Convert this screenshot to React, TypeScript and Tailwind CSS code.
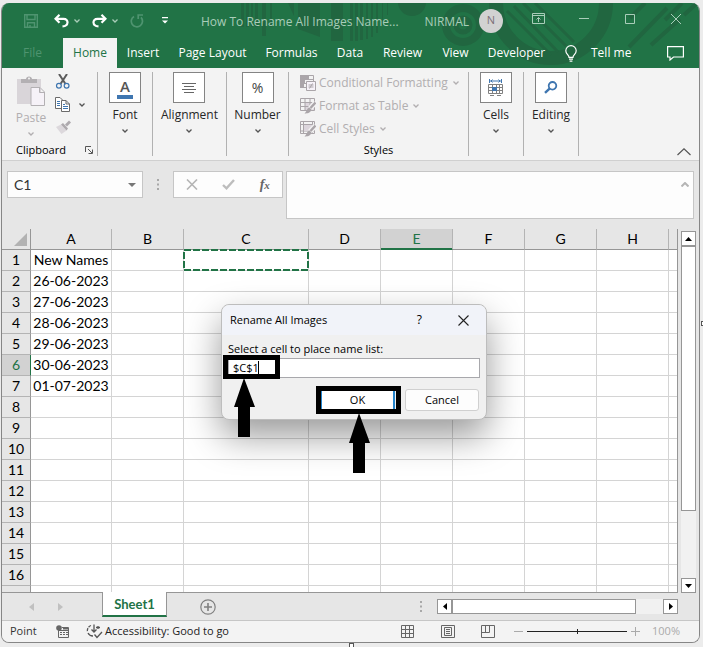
import React, { useState } from 'react';
import clsx from 'clsx';

const MENU = [
  { label: 'File', width: 'w-[61px]' },
  { label: 'Home', width: 'w-[54px]' },
  { label: 'Insert', width: 'w-[52px]' },
  { label: 'Page Layout', width: 'w-[87px]' },
  { label: 'Formulas', width: 'w-[71px]' },
  { label: 'Data', width: 'w-[46px]' },
  { label: 'Review', width: 'w-[59px]' },
  { label: 'View', width: 'w-[47px]' },
  { label: 'Developer', width: 'w-[75px]' },
];

const COLUMNS = [
  { name: 'A', width: 'w-[81px]' },
  { name: 'B', width: 'w-[72px]' },
  { name: 'C', width: 'w-[125px]' },
  { name: 'D', width: 'w-[72px]' },
  { name: 'E', width: 'w-[72px]' },
  { name: 'F', width: 'w-[72px]' },
  { name: 'G', width: 'w-[72px]' },
  { name: 'H', width: 'w-[72px]' },
];

const NAMES = ['New Names', '26-06-2023', '27-06-2023', '28-06-2023', '29-06-2023', '30-06-2023', '01-07-2023'];
const ROWS = Array.from({ length: 16 }, (_, i) => i + 1);

const Chevron = ({ className = '' }: { className?: string }) => (
  <svg width="6" height="4" viewBox="0 0 6 4" className={className} fill="none" stroke="currentColor" strokeWidth="1.3">
    <path d="M0.5 0.5 L3 3 L5.5 0.5" />
  </svg>
);

const Grip = () => (
  <svg width="2" height="11" viewBox="0 0 2 11" fill="#a8a8a8">
    <rect width="2" height="2" y="0" />
    <rect width="2" height="2" y="4.5" />
    <rect width="2" height="2" y="9" />
  </svg>
);

const HeaderPattern = () => (
  <svg className="absolute left-0 top-0" width="697" height="65" viewBox="2 3 697 65" fill="#216640">
    <rect x="241" y="3" width="3" height="24" />
    <rect x="246" y="3" width="3" height="24" />
    <rect x="251" y="3" width="2" height="24" />
    <rect x="255" y="3" width="3" height="24" />
    <rect x="262" y="3" width="4" height="33" />
    <rect x="270" y="3" width="2" height="24" />
    <path d="M288 3 H294 V16 Z M298 3 H320 V37 L298 29 Z" />
    <rect x="331" y="3" width="12" height="38" />
    <rect x="350" y="3" width="3" height="38" />
    <rect x="355" y="3" width="3" height="38" />
    <rect x="360" y="3" width="3" height="37" />
    <rect x="366" y="3" width="2" height="36" />
    <rect x="371" y="3" width="2" height="34" />
    <rect x="376" y="3" width="2" height="30" />
    <rect x="382" y="3" width="1" height="22" />
    <rect x="387" y="3" width="1" height="12" />
    <circle cx="412" cy="2" r="14" />
    <g fill="none" stroke="#216640">
      <circle cx="463" cy="25" r="17" strokeWidth="8" />
      <circle cx="463" cy="25" r="7" strokeWidth="5" />
      <circle cx="551" cy="3" r="55" strokeWidth="14" />
      <path d="M507 11 L551 55 M514 6 L558 52 M523 3 L566 46 M535 3 L574 42" strokeWidth="3" />
      <path d="M645 3 L630 18 M667 8 L629 47 M682 3 L665 20 M680 19 L651 45 M697 3 L684 15" strokeWidth="4" />
    </g>
  </svg>
);

const TitleBar = () => (
  <div className="relative flex h-[35px] items-center pl-[11px] text-[#a9cdb9]">
    <button aria-label="Save" className="grid w-9 place-items-center text-[#4f9470]">
      <svg width="14" height="14" viewBox="0 0 14 14" fill="none" stroke="currentColor" strokeWidth="1.4">
        <path d="M0.7 0.7 H13.3 V13.3 H0.7 Z M3 0.7 V5.5 H11 V0.7 M3.5 13 V8.8 H10.5 V13 M6 11 V13" />
      </svg>
    </button>
    <button aria-label="Undo" className="grid w-6 place-items-center text-white">
      <svg width="15" height="14" viewBox="0 0 15 14" fill="none" stroke="currentColor" strokeWidth="2.2">
        <path d="M5.5 0.8 L1.5 4.8 L5.5 8.8 M1.8 4.8 H9.5 C15 4.8 15 12.2 8.5 12.4" />
      </svg>
    </button>
    <button aria-label="Undo history" className="grid w-2 place-items-center"><Chevron /></button>
    <button aria-label="Redo" className="ml-1.5 grid w-6 place-items-center text-white">
      <svg width="15" height="14" viewBox="0 0 15 14" fill="none" stroke="currentColor" strokeWidth="2.2">
        <path d="M9.5 0.8 L13.5 4.8 L9.5 8.8 M13.2 4.8 H5.5 C0 4.8 0 12.2 6.5 12.4" />
      </svg>
    </button>
    <button aria-label="Redo history" className="grid w-2 place-items-center"><Chevron /></button>
    <button aria-label="Repeat" className="ml-1.5 grid w-6 place-items-center text-[#4f9470]">
      <svg width="14" height="14" viewBox="0 0 14 14" fill="none" stroke="currentColor" strokeWidth="1.7">
        <path d="M4 2.4 A5.6 5.6 0 1 0 11 3.4 M8.2 5 V1 H13" />
      </svg>
    </button>
    <button aria-label="Customize toolbar" className="ml-1 grid w-6 place-items-center text-white">
      <svg width="6" height="7" viewBox="0 0 6 7" fill="currentColor">
        <path d="M0 0 H6 V1.3 H0 Z M0 3.4 H6 L3 6.6 Z" />
      </svg>
    </button>
    <span className="ml-6 whitespace-nowrap pt-0.5">How To Rename All Images Name...</span>
    <span className="ml-auto pt-0.5">NIRMAL</span>
    <span className="ml-2.5 mr-3 grid size-6 place-items-center rounded-full bg-[#d2d2d2] text-[11px] text-[#7d6f78]">N</span>
    <button aria-label="Ribbon display options" className="grid w-[46px] place-items-center pb-1">
      <svg width="13" height="11" viewBox="0 0 13 11" fill="none" stroke="currentColor">
        <path d="M0.5 0.5 H12.5 V10.5 H0.5 Z M0.5 2.5 H12.5 M6.5 9 V4.5 M4.5 6.5 L6.5 4.5 L8.5 6.5" />
      </svg>
    </button>
    <button aria-label="Minimize" className="grid w-[46px] place-items-center pb-1">
      <svg width="10" height="10" viewBox="0 0 10 10" stroke="currentColor"><path d="M0 4.5 H10" /></svg>
    </button>
    <button aria-label="Maximize" className="grid w-[46px] place-items-center pb-1">
      <svg width="10" height="10" viewBox="0 0 10 10" fill="none" stroke="currentColor"><path d="M0.5 0.5 H9.5 V9.5 H0.5 Z" /></svg>
    </button>
    <button aria-label="Close" className="grid w-[46px] place-items-center pb-1">
      <svg width="10" height="10" viewBox="0 0 10 10" stroke="currentColor"><path d="M0 0 L10 10 M10 0 L0 10" /></svg>
    </button>
  </div>
);

const MenuBar = () => {
  const [active, setActive] = useState('Home');

  return (
    <div className="relative flex h-[30px] text-white">
      {MENU.map(({ label, width }) => (
        <button
          key={label}
          onClick={() => setActive(label)}
          className={clsx(
            'shrink-0 whitespace-nowrap text-center',
            width,
            label === 'File' && 'text-[#4f9470]',
            active === label && 'bg-[#f3f3f3] text-[#217346]',
          )}
        >
          {label}
        </button>
      ))}
      <button className="ml-[11px] flex items-center gap-3.5 whitespace-nowrap">
        <svg width="12" height="17" viewBox="0 0 12 17" fill="none" stroke="currentColor" strokeWidth="1.2">
          <path d="M4 12.3 C4 9.8 0.8 9.3 0.8 5.8 A5.2 5.2 0 0 1 11.2 5.8 C11.2 9.3 8 9.8 8 12.3 Z M4 14.2 H8 M4.6 16.2 H7.4" />
        </svg>
        Tell me
      </button>
      <button aria-label="Comments" className="ml-auto mr-[15px]">
        <svg width="17" height="15" viewBox="0 0 17 15" fill="none" stroke="currentColor" strokeWidth="1.2">
          <path d="M0.6 0.6 H16.4 V11 H6.5 L3 14 V11 H0.6 Z" />
        </svg>
      </button>
    </div>
  );
};

interface GroupProps {
  label: string;
  width: string;
  children: React.ReactNode;
}

const CollapsedGroup = ({ label, width, children }: GroupProps) => (
  <div className={clsx('flex shrink-0 justify-center border-r border-[#b1b1b1]', width)}>
    <button className="flex flex-col items-center">
      <span className="grid h-[31px] w-8 place-items-center border border-[#848484] bg-white">{children}</span>
      <span className="mt-1 leading-4">{label}</span>
      <Chevron className="mt-1.5 text-[#555]" />
    </button>
  </div>
);

const StyleGrid = ({ children }: { children?: React.ReactNode }) => (
  <svg width="16" height="16" viewBox="0 0 16 16" fill="none" stroke="#aaa5a9">
    {children}
  </svg>
);

const Brush = () => (
  <>
    <path d="M15.5 4.5 L10 10.5" stroke="#f3f3f3" strokeWidth="5" />
    <path d="M15.5 4.5 L10.5 10" strokeWidth="2.4" stroke="#aaa5a9" />
    <path d="M9.5 9.5 L11.5 11.5 C10.5 15 8 15.5 4.5 15.5 C7 13.5 6.5 10.5 9.5 9.5 Z" fill="#aaa5a9" stroke="none" />
  </>
);

const Ribbon = () => (
  <div className="flex h-[93px] border-b border-[#d0d0d0] bg-[#f3f3f3] py-1 text-[#262626]">
    <div className="flex w-24 shrink-0 flex-col border-r border-[#b1b1b1]">
      <div className="flex h-[74px] pl-[15px]">
        <button className="flex w-7 flex-col items-center text-[#b1aeb0]">
          <svg width="28" height="30" viewBox="0 0 28 30" className="mt-1">
            <path d="M0 3 H24 V28 H0 Z" fill="#d9d5d9" />
            <path d="M4 7 V3 H9 C9 -0.5 15 -0.5 15 3 H20 V7 Z" fill="#b3b0b3" />
            <circle cx="12" cy="2.6" r="1" fill="#f3f3f3" />
            <path d="M14 11.5 H23 L27.5 16 V29.5 H14 Z M22.5 11.5 V16.5 H27.5" fill="#f6f2f8" stroke="#b3b0b3" />
          </svg>
          <span className="mt-1 leading-4">Paste</span>
          <Chevron className="mt-1.5" />
        </button>
        <div className="ml-2.5 flex flex-col gap-2">
          <button aria-label="Cut" className="mt-0.5">
            <svg width="16" height="15" viewBox="0 0 16 15" fill="none">
              <path d="M4 0 L10.5 10 M12 0 L5.5 10" stroke="#5c5c5c" strokeWidth="2" />
              <circle cx="3.9" cy="11.8" r="2.4" stroke="#3f76b0" strokeWidth="1.2" />
              <circle cx="11.6" cy="11.8" r="2.4" stroke="#3f76b0" strokeWidth="1.2" />
            </svg>
          </button>
          <button className="flex items-center gap-2" aria-label="Copy">
            <svg width="16" height="15" viewBox="0 0 16 15" fill="#fff" stroke="#6b6b6b">
              <path d="M0.5 0.5 H5 L8.5 4 V11.5 H0.5 Z" />
              <path d="M2 4.5 H5 M2 6.5 H5 M2 8.5 H5" stroke="#3f76b0" />
              <path d="M6.5 3.5 H11 L14.5 7 V14.5 H6.5 Z M11 3.5 V7 H14.5" />
              <path d="M8 7.5 H10 M8 9.5 H13 M8 11.5 H13" stroke="#3f76b0" />
            </svg>
            <Chevron className="text-[#555]" />
          </button>
          <button aria-label="Format Painter">
            <svg width="17" height="15" viewBox="0 0 17 15">
              <path d="M1 7 L6 4.5 L11.5 10.5 L6.5 14 Z" fill="#dcd8dc" />
              <path d="M6 4.5 L8 3 L13 8.5 L11.5 10.5 Z M10 4.5 L14 0.5 L16 2.5 L12 6.5 Z" fill="#aeaaae" />
            </svg>
          </button>
        </div>
      </div>
      <div className="flex items-center justify-between pl-3.5 pr-1 text-[11px] leading-3 text-black">
        Clipboard
        <button aria-label="Clipboard options">
          <svg width="8" height="8" viewBox="0 0 8 8" fill="none" stroke="#555">
            <path d="M0.5 6 V0.5 H6 M3 3 L7 7 M7.5 3.5 V7.5 H3.5" />
          </svg>
        </button>
      </div>
    </div>

    <CollapsedGroup label="Font" width="w-[55px]">
      <span className="w-4 border-b-4 border-[#3f76b0] text-center text-[15px] font-semibold leading-[18px] text-[#555]">A</span>
    </CollapsedGroup>
    <CollapsedGroup label="Alignment" width="w-[74px]">
      <svg width="14" height="10" viewBox="0 0 14 10" stroke="#666">
        <path d="M0 0.5 H14 M2 3.5 H12 M0 6.5 H14 M2 9.5 H12" />
      </svg>
    </CollapsedGroup>
    <CollapsedGroup label="Number" width="w-[62px]">
      <span className="text-[14px] leading-5 text-[#444]">%</span>
    </CollapsedGroup>

    <div className="flex w-[180px] shrink-0 flex-col border-r border-[#b1b1b1] text-[#b1aeb0]">
      <div className="flex h-[74px] flex-col gap-[7px] pl-[11px] pt-[3px]">
        <button className="flex h-4 items-center gap-[3px] whitespace-nowrap">
          <StyleGrid>
            <path d="M0.5 0.5 H13.5 V12.5 H0.5 Z M0.5 4.5 H13.5 M0.5 8.5 H6" />
            <path d="M0 0 H9 V4 H0 Z M0 5 H5 V8 H0 Z M0 9 H4 V13 H0 Z" fill="#aaa5a9" stroke="none" />
            <path d="M6.5 6.5 H15.5 V15.5 H6.5 Z" fill="#f6f2f8" />
            <path d="M8.5 10 H13.5 M8.5 12 H13.5 M12.5 8.5 L9.5 13.5" />
          </StyleGrid>
          Conditional Formatting
          <Chevron className="ml-0.5" />
        </button>
        <button className="flex h-4 items-center gap-[3px] whitespace-nowrap">
          <StyleGrid>
            <path d="M5 5 H14 V13 H5 Z" fill="#dcd5dc" stroke="none" />
            <path d="M0.5 0.5 H14.5 V12.5 H0.5 Z M0.5 4.5 H14.5 M0.5 8.5 H14.5 M5 0.5 V12.5 M10 0.5 V12.5" />
            <Brush />
          </StyleGrid>
          Format as Table
          <Chevron className="ml-0.5" />
        </button>
        <button className="flex h-4 items-center gap-[3px] whitespace-nowrap">
          <StyleGrid>
            <path d="M0.5 0.5 H14.5 V12.5 H0.5 Z M0.5 3.5 H14.5 M3.5 0.5 V12.5 M12.5 0.5 V12.5 M0.5 10 H14" />
            <path d="M4 4 H12 V10 H4 Z" fill="#dcd5dc" stroke="none" />
            <Brush />
          </StyleGrid>
          Cell Styles
          <Chevron className="ml-0.5" />
        </button>
      </div>
      <div className="text-center text-[11px] leading-3 text-black">Styles</div>
    </div>

    <CollapsedGroup label="Cells" width="w-[55px]">
      <svg width="16" height="17" viewBox="0 0 16 17" fill="none" stroke="#808080">
        <path d="M1.5 0 V4 M13.5 0 V4 M2 2 H13 M4.5 0.5 L3 2 L4.5 3.5 M10.5 0.5 L12 2 L10.5 3.5" stroke="#3f76b0" />
        <path d="M0.5 5.5 H14.5 V14.5 H0.5 Z M0.5 8.5 H14.5 M0.5 11.5 H14.5 M4.5 5.5 V14.5 M8.5 5.5 V14.5 M11.5 5.5 V14.5 M2 16.5 H6 M9 16.5 H13" />
        <path d="M4 8 H9 V12 H4 Z" fill="#3f76b0" stroke="none" />
      </svg>
    </CollapsedGroup>
    <CollapsedGroup label="Editing" width="w-[55px]">
      <svg width="14" height="13" viewBox="0 0 14 13" fill="none" stroke="#3f76b0">
        <circle cx="8.5" cy="4.8" r="3.8" strokeWidth="1.8" />
        <path d="M5.8 7.3 L1 11.8" strokeWidth="2.4" />
      </svg>
    </CollapsedGroup>

    <button aria-label="Collapse ribbon" className="ml-auto mr-2 self-end">
      <svg width="14" height="8" viewBox="0 0 14 8" fill="none" stroke="#555" strokeWidth="1.2">
        <path d="M0.5 7 L7 0.8 L13.5 7" />
      </svg>
    </button>
  </div>
);

const FormulaBar = () => (
  <div className="flex h-[68px] items-start px-[5px] pt-2.5">
    <div className="flex h-[27px] w-[136px] shrink-0 items-center border border-[#c6c6c6] bg-[#fdfdfd] pl-1.5 pr-1.5">
      <input aria-label="Name box" defaultValue="C1" className="w-full min-w-0 bg-transparent font-[Lato,sans-serif] text-sm text-[#333] outline-none" />
      <svg width="8" height="4" viewBox="0 0 8 4" className="shrink-0" fill="#777"><path d="M0 0 H8 L4 4 Z" /></svg>
    </div>
    <div className="grid h-[27px] w-[30px] shrink-0 place-items-center"><Grip /></div>
    <div className="mr-[3px] flex h-[27px] w-[110px] shrink-0 items-center justify-around border border-[#c6c6c6] bg-[#fdfdfd]">
      <button aria-label="Cancel entry">
        <svg width="12" height="11" viewBox="0 0 12 11" stroke="#b5b5b5" strokeWidth="1.6"><path d="M1 0.5 L11 10.5 M11 0.5 L1 10.5" /></svg>
      </button>
      <button aria-label="Confirm entry">
        <svg width="13" height="11" viewBox="0 0 13 11" fill="none" stroke="#bdbdbd" strokeWidth="2.4"><path d="M1 6 L4.5 9.3 L12 1" /></svg>
      </button>
      <button aria-label="Insert function" className="font-['Liberation_Serif',serif] text-sm font-bold italic leading-5 text-[#666]">
        f<span className="text-[11px]">x</span>
      </button>
    </div>
    <div className="flex h-12 flex-1 items-start border border-[#c6c6c6] bg-[#fdfdfd] pr-1">
      <textarea aria-label="Formula" className="h-full flex-1 resize-none bg-transparent outline-none" />
      <svg width="8" height="5" viewBox="0 0 8 5" className="mt-2.5" fill="none" stroke="#b5b5b5" strokeWidth="2"><path d="M0.5 4.5 L4 1 L7.5 4.5" /></svg>
    </div>
  </div>
);

const Sheet = () => (
  <div className="min-w-0 flex-1 overflow-hidden border-b border-r border-[#969696] bg-white">
    <table className="w-full table-fixed border-separate border-spacing-0 whitespace-nowrap font-[Lato,sans-serif] text-sm leading-5 text-black">
      <thead>
        <tr className="h-[21px] bg-[#e6e6e6]">
          <th className="w-[29px] border-b border-r border-[#969696] p-0" aria-label="Select all">
            <svg width="13" height="13" viewBox="0 0 13 13" className="ml-auto mr-[3px]" fill="#b2b2b2"><path d="M13 0 V13 H0 Z" /></svg>
          </th>
          {COLUMNS.map(({ name, width }) => (
            <th
              key={name}
              className={clsx(
                'border-b border-r border-r-[#b4b4b4] p-0 font-normal',
                width,
                name === 'E' ? 'border-b-[#217346] bg-[#d2d2d2] text-[#217346] shadow-[inset_0_-1px_0_#217346]' : 'border-b-[#969696]',
              )}
            >
              {name}
            </th>
          ))}
          <th className="border-b border-[#969696] p-0" />
        </tr>
      </thead>
      <tbody>
        {ROWS.map((row) => (
          <tr key={row} className="h-[21px]">
            <th
              className={clsx(
                'border-b border-r border-b-[#b4b4b4] p-0 font-normal',
                row === 6 ? 'border-r-[#217346] bg-[#d2d2d2] text-[#217346]' : 'border-r-[#969696] bg-[#e6e6e6]',
              )}
            >
              {row}
            </th>
            {COLUMNS.map(({ name }) => (
              <td key={name} className="relative border-b border-r border-[#d4d4d4] p-0 text-center">
                {name === 'A' && NAMES[row - 1]}
                {name === 'C' && row === 1 && (
                  <svg className="absolute -left-px -top-px h-[22px] w-[126px]" fill="none" stroke="#217346" strokeWidth="2">
                    <rect x="1" y="1" width="124" height="20" strokeDasharray="7 2" />
                  </svg>
                )}
              </td>
            ))}
            <td className="border-b border-[#d4d4d4] p-0" />
          </tr>
        ))}
        <tr className="h-1.5">
          <th className="border-r border-[#969696] bg-[#e6e6e6] p-0" />
          {COLUMNS.map(({ name }) => (
            <td key={name} className="border-r border-[#d4d4d4] p-0" />
          ))}
          <td className="p-0" />
        </tr>
      </tbody>
    </table>
  </div>
);

const scrollButton = 'grid size-[15px] shrink-0 place-items-center border border-[#969696] bg-white';

const VerticalScroll = () => (
  <div className="ml-[3px] mr-[3px] mt-0.5 flex w-[15px] flex-col bg-[#f1f1f1]">
    <button aria-label="Scroll up" className={scrollButton}>
      <svg width="7" height="4" viewBox="0 0 7 4"><path d="M3.5 0 L7 4 H0 Z" /></svg>
    </button>
    <div className="h-[265px] border border-[#969696] bg-white" />
    <button aria-label="Scroll down" className={clsx(scrollButton, 'mt-auto')}>
      <svg width="7" height="4" viewBox="0 0 7 4"><path d="M3.5 4 L7 0 H0 Z" /></svg>
    </button>
  </div>
);

const SheetTabs = () => (
  <div className="flex h-7 items-start border-b border-[#c6c6c6]">
    <div className="flex w-[100px] items-center gap-6 self-center pl-[27px]">
      <button aria-label="Previous sheet"><svg width="5" height="8" viewBox="0 0 5 8" fill="#c0c0c0"><path d="M5 0 V8 L0 4 Z" /></svg></button>
      <button aria-label="Next sheet"><svg width="5" height="8" viewBox="0 0 5 8" fill="#c0c0c0"><path d="M0 0 V8 L5 4 Z" /></svg></button>
    </div>
    <button className="-mt-px h-[25px] w-[65px] border-x border-b-2 border-x-[#969696] border-b-[#217346] bg-white pt-0.5 font-[Lato,sans-serif] text-[13px] font-bold text-[#217346]">
      Sheet1
    </button>
    <button aria-label="New sheet" className="ml-[33px] self-center">
      <svg width="16" height="16" viewBox="0 0 16 16" fill="none" stroke="#808080" strokeWidth="1.2">
        <circle cx="8" cy="8" r="7.2" />
        <path d="M8 4 V12 M4 8 H12" strokeWidth="1.6" />
      </svg>
    </button>
    <div className="ml-auto mr-[21px] flex items-center self-center">
      <span className="mr-[15px]"><Grip /></span>
      <button aria-label="Scroll left" className={scrollButton}>
        <svg width="4" height="7" viewBox="0 0 4 7"><path d="M4 0 V7 L0 3.5 Z" /></svg>
      </button>
      <div className="flex h-[15px] w-[211px] bg-[#f1f1f1]">
        <div className="w-[184px] border border-[#969696] bg-white" />
      </div>
      <button aria-label="Scroll right" className={scrollButton}>
        <svg width="4" height="7" viewBox="0 0 4 7"><path d="M0 0 V7 L4 3.5 Z" /></svg>
      </button>
    </div>
  </div>
);

const StatusBar = () => (
  <div className="flex h-[21px] items-center bg-[#f3f3f3] pl-2 pr-[19px] text-[11px] text-[#333]">
    <span className="w-[46px]">Point</span>
    <svg width="14" height="14" viewBox="0 0 14 14" fill="none" stroke="#666">
      <path d="M2.5 3 V12.5 H12.5 V2.5 H6 M2.5 5.5 H12.5" />
      <path d="M4 7.5 H6 M7 7.5 H9 M10 7.5 H12 M4 9.5 H6 M7 9.5 H9 M10 9.5 H12" />
      <circle cx="3" cy="3" r="2.8" fill="#666" stroke="none" />
      <path d="M7 3.8 H12" strokeWidth="1.6" />
    </svg>
    <button className="ml-4 flex items-center gap-0.5 whitespace-nowrap text-[#222]">
      <svg width="17" height="15" viewBox="0 0 17 15" fill="none" stroke="#555" strokeWidth="1.3">
        <path d="M5 1.5 A5.5 5.5 0 0 0 1.5 8" strokeDasharray="3 1" />
        <path d="M2 9 A5.5 5.5 0 0 0 7 12 M8 0.5 V8 M5.5 5.5 L8 8 L10.5 5.5 M12 2 V5 M10 3.5 H14 M8.5 10.5 L11 13.5 L16 8" />
      </svg>
      Accessibility: Good to go
    </button>
    <div className="ml-auto flex items-center">
      <button aria-label="Normal view" className="grid w-[41px] place-items-center">
        <svg width="13" height="13" viewBox="0 0 13 13" fill="none" stroke="#666"><path d="M0.5 0.5 H12.5 V12.5 H0.5 Z M4.5 0.5 V12.5 M8.5 0.5 V12.5 M0.5 4.5 H12.5 M0.5 8.5 H12.5" /></svg>
      </button>
      <button aria-label="Page layout view" className="grid w-10 place-items-center">
        <svg width="14" height="13" viewBox="0 0 14 13" fill="none" stroke="#666"><path d="M0.5 0.5 H13.5 V12.5 H0.5 Z M3.5 2.5 H10.5 V10.5 H3.5 Z M5 4.5 H9 M5 6.5 H9 M5 8.5 H9" /></svg>
      </button>
      <button aria-label="Page break view" className="grid w-10 place-items-center">
        <svg width="14" height="13" viewBox="0 0 14 13" fill="none" stroke="#666"><path d="M0.5 0.5 H13.5 V12.5 H0.5 Z M4.5 0.5 V7.5 M8.5 0.5 V7.5 M0.5 7.5 H8.5" /></svg>
      </button>
      <button aria-label="Zoom out" className="ml-1.5">
        <svg width="9" height="9" viewBox="0 0 9 9" stroke="#aaa"><path d="M0 4.5 H9" /></svg>
      </button>
      <input
        type="range"
        aria-label="Zoom"
        defaultValue={50}
        className="mx-1 h-[5px] w-[100px] appearance-none bg-[linear-gradient(#222,#222)] bg-[length:100%_1px] bg-center bg-no-repeat [&::-webkit-slider-thumb]:h-[5px] [&::-webkit-slider-thumb]:w-px [&::-webkit-slider-thumb]:appearance-none [&::-webkit-slider-thumb]:bg-[#222]"
      />
      <button aria-label="Zoom in">
        <svg width="9" height="9" viewBox="0 0 9 9" stroke="#aaa"><path d="M0 4.5 H9 M4.5 0 V9" /></svg>
      </button>
      <span className="ml-3 w-7 text-right text-[#aaa]">100%</span>
    </div>
  </div>
);

const RenameDialog = () => (
  <div
    role="dialog"
    aria-label="Rename All Images"
    className="absolute left-[221px] top-[304px] h-[116px] w-[266px] rounded-lg border border-[#bdbdbd] bg-[#f0f0f0] text-[11px] text-black shadow-[0_16px_36px_rgba(0,0,0,0.4)]"
  >
    <div className="flex h-[30px] items-center rounded-t-lg bg-[#f1f3f9] pl-2 pr-[17px]">
      <span>Rename All Images</span>
      <button aria-label="Help" className="ml-auto mr-9 text-xs font-medium">?</button>
      <button aria-label="Close dialog">
        <svg width="11" height="11" viewBox="0 0 11 11" stroke="#222" strokeWidth="1.1"><path d="M0.5 0.5 L10.5 10.5 M10.5 0.5 L0.5 10.5" /></svg>
      </button>
    </div>
    <div className="px-1.5 pt-1.5">
      <label htmlFor="target" className="block leading-4">Select a cell to place name list:</label>
      <input
        id="target"
        defaultValue="$C$1"
        className="mt-px block h-5 w-[252px] border border-[#a8a8ac] bg-white pb-0.5 pl-1 outline-none"
      />
      <div className="mt-[11px] flex gap-2.5 pl-[92px]">
        <button className="h-[22px] w-[75px] border-x-2 border-[#2384cc] bg-white">OK</button>
        <button className="h-[22px] w-[74px] rounded-[3px] border border-[#d0d0d0] bg-[#fdfdfd]">Cancel</button>
      </div>
    </div>
  </div>
);

// Black frames and arrows pointing at the cell box and the OK button
const Callouts = () => (
  <svg className="pointer-events-none absolute left-[220px] top-[350px]" width="184" height="126" viewBox="220 350 184 126">
    <path d="M225.5 357.5 H277.5 V376.5 H225.5 Z M318.5 388.5 H398.5 V411.5 H318.5 Z" fill="none" stroke="#000" strokeWidth="5" />
    <path d="M258.5 361 V374" stroke="#000" />
    <path d="M244 378 L255 407 H250 V437 H238 V407 H234 Z" />
    <path d="M359 413 L370 443 H365 V473 H353 V443 H349 Z" />
  </svg>
);

export default function App() {
  return (
    <div className="relative bg-[#ececec] pb-1 pl-px pr-[3px] pt-[3px] font-['Open_Sans',sans-serif] text-xs">
      <div className="overflow-hidden rounded-lg border-x border-b border-[#868686] bg-[#e6e6e6]">
        <header className="relative bg-[#217346]">
          <HeaderPattern />
          <TitleBar />
          <MenuBar />
        </header>
        <Ribbon />
        <FormulaBar />
        <div className="flex">
          <Sheet />
          <VerticalScroll />
        </div>
        <SheetTabs />
        <StatusBar />
      </div>
      <RenameDialog />
      <Callouts />
      <span className="absolute right-0 top-[321px] h-[5px] w-0.5 border border-r-0 border-[#555] bg-white" />
      <span className="absolute bottom-0 left-[349px] h-1 w-[5px] border border-b-0 border-[#555] bg-white" />
    </div>
  );
}
